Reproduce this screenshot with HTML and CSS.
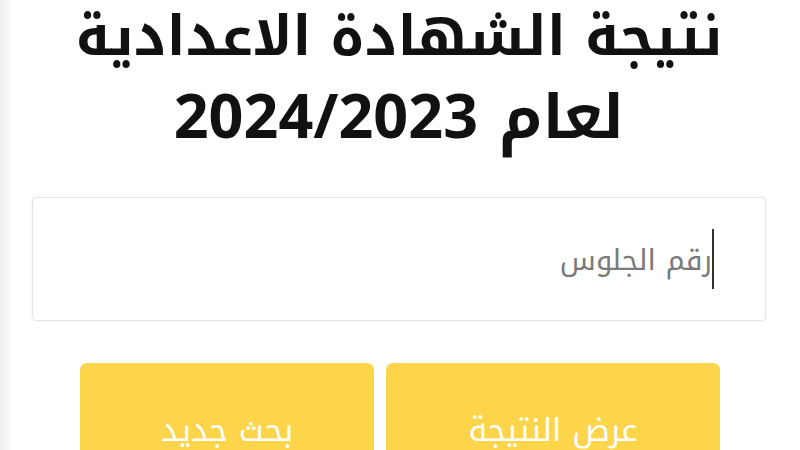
FILE: index.html
```html
<!DOCTYPE html>
<html lang="ar" dir="rtl">
<head>
<meta charset="utf-8">
<title>نتيجة الشهادة الاعدادية</title>
<link rel="stylesheet" href="styles.css">
</head>
<body>
<div class="page">
  <h1 class="title">
    <span class="line line-1">نتيجة الشهادة الاعدادية</span>
    <span class="line line-2">لعام 2024/2023</span>
  </h1>
  <div class="field">
    <span class="caret"></span>
    <span class="placeholder">رقم الجلوس</span>
  </div>
  <div class="actions">
    <div class="btn">عرض النتيجة</div>
    <div class="btn">بحث جديد</div>
  </div>
</div>
</body>
</html>
```
FILE: styles.css
```css
html, body {
  margin: 0;
  padding: 0;
  height: 100%;
  overflow: hidden;
}
body {
  background: linear-gradient(to right, #eeeeee 0, #f3f3f3 6px, #ffffff 12px);
  font-family: "Noto Kufi Arabic", "Noto Sans Arabic", "DejaVu Sans", sans-serif;
}
.page {
  padding: 0 34px 0 32px;
  display: flex;
  flex-direction: column;
}
.title {
  margin: -3px 0 0 0;
  font-weight: 700;
  color: #111;
  text-align: center;
  display: flex;
  flex-direction: column;
}
.line { display: block; }
.line-1 {
  font-size: 55px;
  line-height: 80px;
}
.line-2 {
  font-size: 61px;
  line-height: 83px;
}
.field {
  margin-top: 37px;
  height: 122px;
  border: 1px solid #e4e4e4;
  border-radius: 4px;
  box-shadow: 0 0 3px rgba(0,0,0,0.05);
  display: flex;
  align-items: center;
  padding-right: 51px;
}
.caret {
  width: 2px;
  height: 60px;
  background: #333;
}
.placeholder {
  font-size: 29px;
  color: #7a7a7a;
  margin-top: 2px;
}
.actions {
  margin-top: 42px;
  display: grid;
  grid-template-columns: 334px 294px;
  gap: 12px;
  justify-content: center;
  padding-left: 2px;
}
.btn {
  height: 134px;
  background: #fdd54b;
  border-radius: 7px;
  color: #fff;
  font-size: 32px;
  display: flex;
  align-items: center;
  justify-content: center;
}
```
